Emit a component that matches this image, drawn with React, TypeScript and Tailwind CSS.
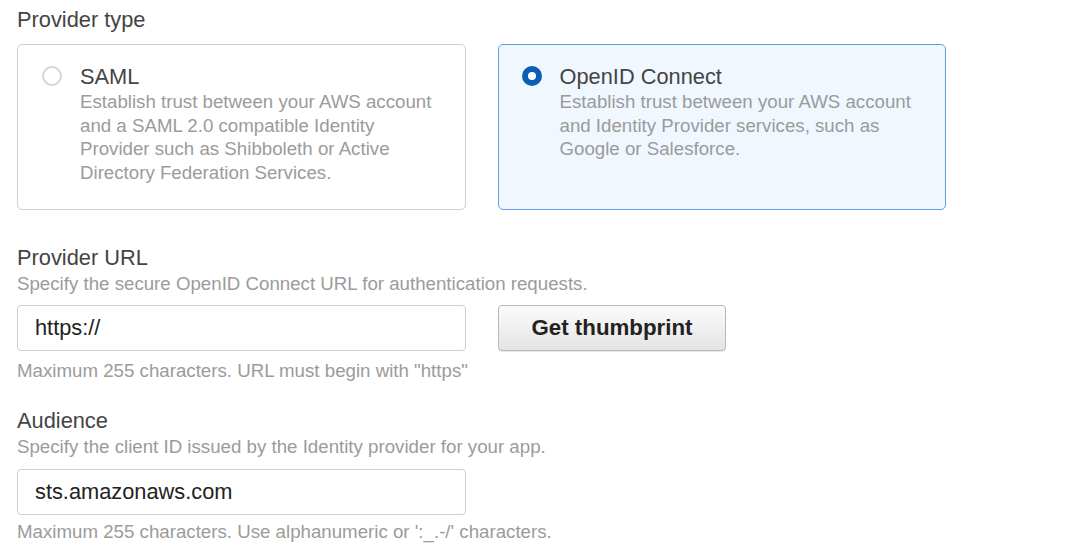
import React, { useState } from 'react';

type ProviderType = 'saml' | 'oidc';

interface ProviderOption {
  id: ProviderType;
  title: string;
  description: string;
}

const options: ProviderOption[] = [
  {
    id: 'saml',
    title: 'SAML',
    description:
      'Establish trust between your AWS account and a SAML 2.0 compatible Identity Provider such as Shibboleth or Active Directory Federation Services.',
  },
  {
    id: 'oidc',
    title: 'OpenID Connect',
    description:
      'Establish trust between your AWS account and Identity Provider services, such as Google or Salesforce.',
  },
];

const Radio: React.FC<{ checked: boolean }> = ({ checked }) =>
  checked ? (
    <div className="w-[20px] h-[20px] rounded-full bg-[#0b5fb3] flex items-center justify-center flex-shrink-0">
      <div className="w-[8px] h-[8px] rounded-full bg-white" />
    </div>
  ) : (
    <div className="w-[20px] h-[20px] rounded-full border-2 border-[#d4d4d4] bg-white flex-shrink-0" />
  );

const App: React.FC = () => {
  const [providerType, setProviderType] = useState<ProviderType>('oidc');
  const [url, setUrl] = useState('https://');
  const [audience, setAudience] = useState('sts.amazonaws.com');

  return (
    <div
      className="min-h-[550px] bg-white pl-[17px] pt-[8px] text-[#444]"
      style={{ fontFamily: '"Liberation Sans", Arial, sans-serif' }}
    >
      <div className="text-[21.8px] leading-[24px] text-[#444]">Provider type</div>

      <div className="mt-[12px] grid grid-cols-2 gap-[32px] w-[929px]">
        {options.map((opt) => {
          const selected = providerType === opt.id;
          return (
            <div
              key={opt.id}
              onClick={() => setProviderType(opt.id)}
              className={
                selected
                  ? 'h-[166px] rounded-[5px] border-[1.5px] border-[#5fa0e6] bg-[#f0f7ff] pl-[23px] pt-[20px] flex cursor-pointer'
                  : 'h-[166px] rounded-[5px] border border-[#cfcfcf] bg-white pl-[24px] pt-[20px] flex cursor-pointer'
              }
            >
              <div className="mt-[1px]">
                <Radio checked={selected} />
              </div>
              <div className="ml-[18px] w-[365px]">
                <div className="text-[21.8px] leading-[24px] text-[#444]">{opt.title}</div>
                <div className="mt-[1px] text-[18.7px] leading-[23.5px] text-[#9b9b9b]">
                  {opt.description}
                </div>
              </div>
            </div>
          );
        })}
      </div>

      <div className="mt-[36px] text-[21.8px] leading-[24px] text-[#444]">Provider URL</div>
      <div className="mt-[2px] text-[18.7px] leading-[24px] text-[#9b9b9b]">
        Specify the secure OpenID Connect URL for authentication requests.
      </div>
      <div className="mt-[9px] flex gap-[32px]">
        <input
          value={url}
          onChange={(e) => setUrl(e.target.value)}
          className="w-[449px] h-[46px] rounded-[4px] border border-[#cfcfcf] bg-white pl-[17px] text-[21.8px] text-[#222] outline-none"
        />
        <button className="w-[228px] h-[46px] rounded-[4px] border border-[#b9b9b9] bg-gradient-to-b from-[#fbfbfb] to-[#e4e4e4] text-[22.3px] font-bold text-[#222] shadow-[0_1px_1px_rgba(0,0,0,0.1)]">
          Get thumbprint
        </button>
      </div>
      <div className="mt-[8px] text-[18.7px] leading-[24px] text-[#9b9b9b]">
        Maximum 255 characters. URL must begin with "https"
      </div>

      <div className="mt-[26px] text-[21.8px] leading-[24px] text-[#444]">Audience</div>
      <div className="mt-[2px] text-[18.7px] leading-[24px] text-[#9b9b9b]">
        Specify the client ID issued by the Identity provider for your app.
      </div>
      <input
        value={audience}
        onChange={(e) => setAudience(e.target.value)}
        className="mt-[10px] block w-[449px] h-[46px] rounded-[4px] border border-[#cfcfcf] bg-white pl-[17px] text-[21.8px] text-[#222] outline-none"
      />
      <div className="mt-[5px] text-[18.7px] leading-[24px] text-[#9b9b9b]">
        Maximum 255 characters. Use alphanumeric or ':_.-/' characters.
      </div>
    </div>
  );
};

export default App;
